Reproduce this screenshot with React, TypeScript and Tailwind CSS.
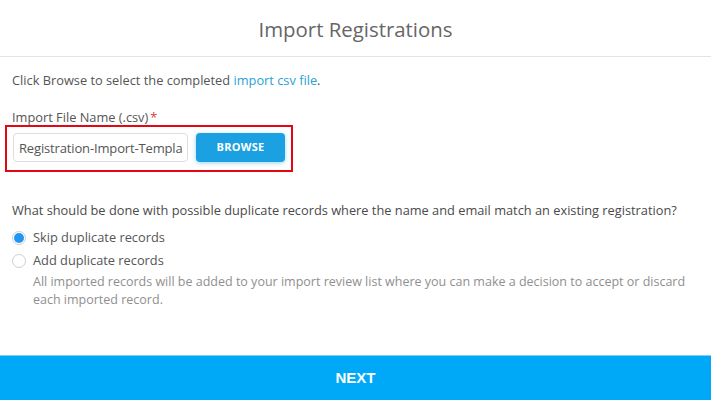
import { useState } from "react";

export default function App() {
  const [mode, setMode] = useState<"skip" | "add">("skip");

  return (
    <div className="flex h-[400px] w-[711px] flex-col bg-white font-['Open_Sans',sans-serif] text-[#555]">
      <header className="flex h-[57px] items-center justify-center border-b border-[#e3e3e3] pt-[2px]">
        <h1 className="text-[20.4px] font-normal text-[#666]">Import Registrations</h1>
      </header>

      <main className="flex-1 px-3 pt-[14px] text-[12.8px]">
        <p>
          Click Browse to select the completed{" "}
          <a href="#" className="text-[#2a9fd8]">
            import csv file
          </a>
          .
        </p>

        <label className="mt-[19px] block leading-4">
          Import File Name (.csv)<span className="ml-0.5 text-[#e53935]">*</span>
        </label>
        <div className="-ml-[7px] flex w-[288px] items-start gap-2 border-2 border-[#e30613] px-[6px] pb-[8px] pt-[6px]">
          <input
            readOnly
            value="Registration-Import-Template.csv"
            className="h-[29px] w-[175px] rounded-sm border border-[#ddd] px-[5px] text-[13px] tracking-[-0.15px] text-[#555] outline-none"
          />
          <button
            type="button"
            className="h-[29px] w-[89px] rounded bg-[#1ba0e2] text-[11px] font-bold tracking-wide text-white shadow-[0_1px_4px_rgba(27,160,226,0.45)]"
          >
            BROWSE
          </button>
        </div>

        <p className="mt-[29px] leading-[19px] text-[#4a4a4a]">
          What should be done with possible duplicate records where the name and email match an existing registration?
        </p>

        <div className="mt-[8px] flex flex-col gap-[4px]">
          <label className="flex cursor-pointer items-center gap-[7px] leading-[19px]" onClick={() => setMode("skip")}>
            <Radio checked={mode === "skip"} />
            <span>Skip duplicate records</span>
          </label>
          <label className="flex cursor-pointer items-center gap-[7px] leading-[19px]" onClick={() => setMode("add")}>
            <Radio checked={mode === "add"} />
            <span>Add duplicate records</span>
          </label>
        </div>
        <p className="mt-[3px] pl-[21px] text-[12.5px] leading-[18px] text-[#8f8f8f]">
          All imported records will be added to your import review list where you can make a decision to accept or discard each imported record.
        </p>
      </main>

      <button
        type="button"
        className="h-[45px] w-full border-t border-[#7fd0f5] bg-[#00a9f7] font-['Liberation_Sans_Narrow','Liberation_Sans',sans-serif] text-[15px] font-bold text-white"
      >
        NEXT
      </button>
    </div>
  );
}

function Radio({ checked }: { checked: boolean }) {
  return (
    <span className="flex h-[14px] w-[14px] shrink-0 items-center justify-center rounded-full border border-[#cfcfcf] bg-white">
      {checked && <span className="h-[10px] w-[10px] rounded-full bg-[#2196f3]" />}
    </span>
  );
}
